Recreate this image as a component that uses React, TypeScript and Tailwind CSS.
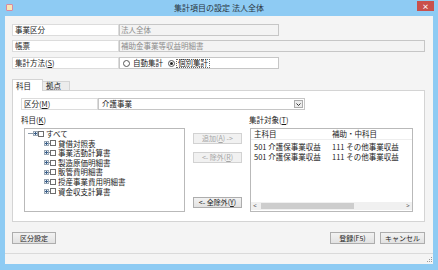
import React, { FC } from 'react';

const font = "font-['Noto_Sans_CJK_JP',sans-serif]";

const Mn: FC<{ c: string }> = ({ c }) => <span className="underline underline-offset-1">{c}</span>;

const Btn: FC<{ children: React.ReactNode; disabled?: boolean; className?: string }> = ({ children, disabled, className = '' }) => (
  <div
    className={`flex h-[11px] items-center justify-center whitespace-nowrap border text-[7px] leading-none ${
      disabled
        ? 'border-[#d2d2d2] bg-[#f1f1f1] text-[#a6a6a6]'
        : 'border-[#adadad] bg-gradient-to-b from-[#f2f2f2] to-[#e2e2e2] text-[#222]'
    } ${className}`}
  >
    {children}
  </div>
);

const Expander: FC = () => (
  <div className="relative flex h-[5px] w-[5px] items-center justify-center border border-[#9aa7b4] bg-[#eef3f8]">
    <div className="h-[1px] w-[3px] bg-[#3b5f88]" />
    <div className="absolute h-[3px] w-[1px] bg-[#3b5f88]" />
  </div>
);

const Check: FC = () => <div className="h-[6px] w-[6px] border border-[#6e6e6e] bg-white" />;

const treeChildren = ['貸借対照表', '事業活動計算書', '製造原価明細書', '販管費明細書', '授産事業費用明細書', '資金収支計算書'];

const targets = [
  { main: '501 介護保事業収益', sub: '111 その他事業収益' },
  { main: '501 介護保事業収益', sub: '111 その他事業収益' },
];

const App: FC = () => {
  return (
    <div className={`flex h-[270px] w-[438px] flex-col bg-[#8ecbf3] text-[#1b1b1b] ${font}`}>
      {/* title bar */}
      <div className="flex h-[16px] items-start">
        <div className="flex w-[40px] pl-[6px] pt-[4px]">
          <div className="h-[7px] w-[7px] rounded-[1px] border border-[#d98aa0] bg-[#f7e6b8]" />
        </div>
        <div className="flex-1 pt-[4px] text-center text-[8px] leading-none text-[#2a3440]">集計項目の設定 法人全体</div>
        <div className="flex w-[40px] justify-end pr-[4px] pt-[1px]">
          <div className="flex h-[10px] w-[17px] items-center justify-center bg-[#c9504c] text-[7px] font-bold leading-none text-white">
            ×
          </div>
        </div>
      </div>

      {/* client */}
      <div className="mb-[6px] ml-[5px] mr-[5px] flex flex-1 flex-col bg-[#f4f4f4] text-[7.5px] leading-none">
        <div className="flex flex-col pl-[7px] pt-[8px]">
          <div className="flex h-[12px]">
            <div className="flex w-[107px] items-center border border-[#dcdcdc] bg-white pl-[2px]">事業区分</div>
            <div className="flex w-[160px] items-center border border-[#c6c6c6] bg-[#f3f3f3] pl-[1px] text-[#8c8c8c]">法人全体</div>
          </div>
          <div className="mt-[4px] flex h-[12px]">
            <div className="flex w-[107px] items-center border border-[#dcdcdc] bg-white pl-[2px]">帳票</div>
            <div className="flex w-[306px] items-center border border-[#c6c6c6] bg-[#f3f3f3] pl-[1px] text-[#8c8c8c]">補助金事業等収益明細書</div>
          </div>
          <div className="mt-[5px] flex h-[12px]">
            <div className="flex w-[107px] items-center border border-[#dcdcdc] bg-white pl-[2px]">
              集計方法(<Mn c="S" />)
            </div>
            <div className="flex w-[160px] items-center border border-[#c6c6c6] bg-white pl-[3px]">
              <div className="h-[7px] w-[7px] rounded-full border border-[#555] bg-white" />
              <span className="ml-[3px]">自動集計</span>
              <div className="ml-[5px] flex h-[7px] w-[7px] items-center justify-center rounded-full border border-[#555] bg-white">
                <div className="h-[3px] w-[3px] rounded-full bg-[#222]" />
              </div>
              <span className="ml-[1px] flex h-[9px] items-center border border-dotted border-[#666] px-[1px]">個別集計</span>
            </div>
          </div>

          {/* tabs */}
          <div className="mt-[10px] flex items-end">
            <div className="relative z-10 -mb-px flex h-[12px] w-[31px] items-center border border-b-0 border-[#d4d4d4] bg-white pl-[3px]">科目</div>
            <div className="flex h-[9px] w-[27px] items-center border border-b-0 border-l-0 border-[#d4d4d4] bg-[#ececec] pl-[3px]">拠点</div>
          </div>

          {/* panel */}
          <div className="flex h-[132px] w-[413px] flex-col border border-[#d4d4d4] bg-white pl-[8px] pt-[7px]">
            <div className="flex h-[12px]">
              <div className="flex w-[77px] items-center border border-[#dcdcdc] bg-white pl-[2px]">
                区分(<Mn c="M" />)
              </div>
              <div className="flex w-[207px] items-center border border-[#c6c6c6] bg-white pl-[3px]">
                <span className="flex-1">介護事業</span>
                <div className="mr-[1px] flex h-[8px] w-[9px] items-center justify-center border border-[#acacac] bg-[#ececec]">
                  <svg width="5" height="3" viewBox="0 0 5 3">
                    <path d="M0.5 0.5 L2.5 2.5 L4.5 0.5" fill="none" stroke="#333" strokeWidth="1" />
                  </svg>
                </div>
              </div>
            </div>

            <div className="mt-[4px] flex">
              {/* tree column */}
              <div className="flex flex-col">
                <div className="h-[14px] pt-[2px]">
                  科目(<Mn c="K" />)
                </div>
                <div className="ml-[3px] flex h-[84px] w-[161px] flex-col border border-[#b9b9b9] bg-white">
                  <div className="flex h-[9.6px] items-center pl-[3px]">
                    <div className="h-px w-[5px] bg-[#8a9aaa]" />
                    <Expander />
                    <Check />
                    <span className="ml-[2px]">すべて</span>
                  </div>
                  {treeChildren.map((t) => (
                    <div key={t} className="flex h-[9.6px] items-center pl-[19px]">
                      <Expander />
                      <div className="h-px w-[1px] bg-[#8a9aaa]" />
                      <Check />
                      <span className="ml-[2px]">{t}</span>
                    </div>
                  ))}
                </div>
              </div>

              {/* buttons */}
              <div className="ml-[8px] flex w-[49px] flex-col pt-[19px]">
                <Btn disabled>
                  追加(<Mn c="A" />) -&gt;
                </Btn>
                <Btn disabled className="mt-[8px]">
                  &lt;- 除外(<Mn c="R" />)
                </Btn>
                <Btn className="mt-[34px]">
                  &lt;- 全除外(<Mn c="Y" />)
                </Btn>
              </div>

              {/* target list */}
              <div className="ml-[7px] flex flex-col">
                <div className="h-[14px] pt-[2px]">
                  集計対象(<Mn c="T" />)
                </div>
                <div className="ml-px flex h-[84px] w-[163px] flex-col border border-[#b9b9b9] bg-white">
                  <div className="flex h-[11px] items-center border-b border-[#eeeeee]">
                    <span className="w-[81px] shrink-0 pl-[3px]">主科目</span>
                    <span>補助・中科目</span>
                  </div>
                  <div className="mt-[2px] flex flex-col">
                    {targets.map((r, i) => (
                      <div key={i} className="flex h-[9.6px] items-center whitespace-nowrap">
                        <span className="w-[81px] shrink-0 pl-[3px]">{r.main}</span>
                        <span>{r.sub}</span>
                      </div>
                    ))}
                  </div>
                  <div className="flex-1" />
                  <div className="mb-px flex h-[8px] items-center bg-[#f0f0f0] text-[6px] text-[#444]">
                    <span className="w-[8px] text-center">&lt;</span>
                    <div className="ml-[2px] h-[6px] w-[93px] bg-[#cdcdcd]" />
                    <span className="flex-1" />
                    <span className="w-[8px] text-center">&gt;</span>
                  </div>
                </div>
              </div>
            </div>
          </div>

          {/* bottom buttons */}
          <div className="mt-[10px] flex w-[413px] items-center">
            <Btn className="h-[12px] w-[44px]">区分設定</Btn>
            <div className="flex-1" />
            <Btn className="h-[12px] w-[45px]">登録(F5)</Btn>
            <Btn className="ml-[5px] h-[12px] w-[45px]">キャンセル</Btn>
          </div>
        </div>
        <div className="flex-1" />
        <div className="flex h-[11px] items-end justify-end border-t border-[#dadada] pb-[2px] pr-[1px]">
          <div className="grid grid-cols-3 gap-px">
            <div className="h-px w-px" />
            <div className="h-px w-px" />
            <div className="h-px w-px bg-[#9a9a9a]" />
            <div className="h-px w-px" />
            <div className="h-px w-px bg-[#9a9a9a]" />
            <div className="h-px w-px bg-[#9a9a9a]" />
            <div className="h-px w-px bg-[#9a9a9a]" />
            <div className="h-px w-px bg-[#9a9a9a]" />
            <div className="h-px w-px bg-[#9a9a9a]" />
          </div>
        </div>
      </div>
    </div>
  );
};

export default App;
